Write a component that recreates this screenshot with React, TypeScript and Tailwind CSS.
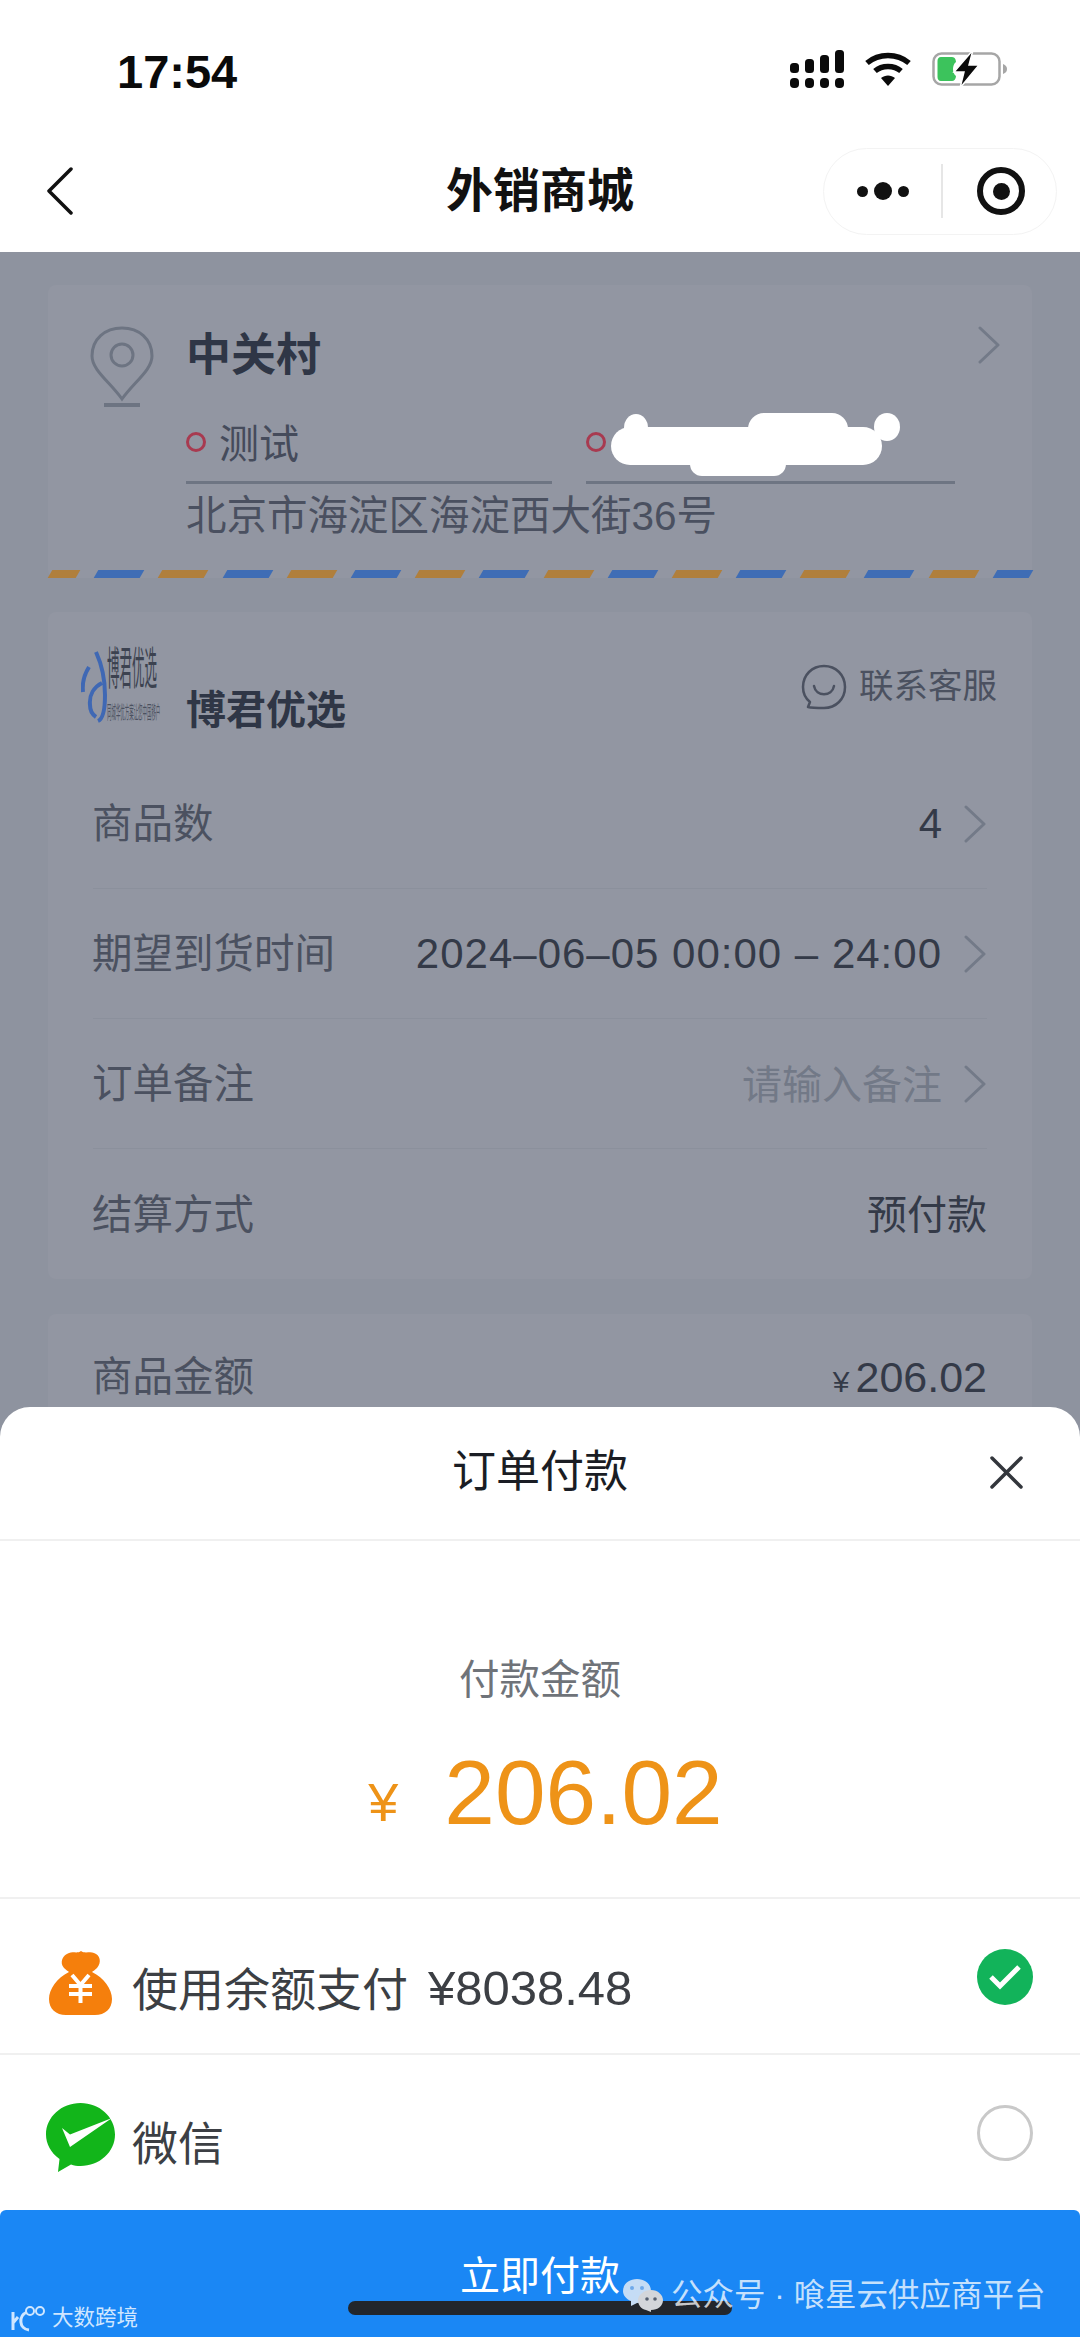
import type { ReactNode } from "react";

const FONT = "[font-family:'Liberation_Sans','Noto_Sans_CJK_SC',sans-serif]";
const STRIPES = Array.from({ length: 16 }, (_, i) => i);

function Chevron() {
  return (
    <svg width="23" height="38" viewBox="0 0 23 38" fill="none" className="shrink-0">
      <polyline points="2,2 20,19 2,36" stroke="#737a88" strokeWidth="3" strokeLinecap="round" strokeLinejoin="round" />
    </svg>
  );
}

function SignalIcon() {
  const cols = [
    { x: 0, y: 13 },
    { x: 15, y: 9 },
    { x: 30, y: 5 },
    { x: 45, y: 0 },
  ];
  return (
    <svg width="54" height="38" viewBox="0 0 54 38" fill="#0a0a0a">
      {cols.map((c) => (
        <g key={c.x}>
          <rect x={c.x} y={c.y} width="9" height={23 - c.y} rx="3.5" />
          <rect x={c.x} y="28" width="9" height="10" rx="4" />
        </g>
      ))}
    </svg>
  );
}

function WifiIcon() {
  return (
    <svg width="46" height="35" viewBox="0 0 46 35" fill="none">
      <path d="M2 11 C14 1 32 1 44 11" stroke="#0a0a0a" strokeWidth="5.5" />
      <path d="M10 19 C17 13 29 13 36 19" stroke="#0a0a0a" strokeWidth="5.5" />
      <path d="M16 26 C20 22.5 26 22.5 30 26 L23 34 Z" fill="#0a0a0a" />
    </svg>
  );
}

function BatteryIcon() {
  return (
    <svg width="76" height="38" viewBox="0 0 76 38">
      <rect x="1.5" y="3.5" width="66" height="31" rx="8" fill="none" stroke="#a6a6a6" strokeWidth="2.5" />
      <path d="M71 14 C74 15 75 17 75 19 C75 21 74 23 71 24 Z" fill="#a6a6a6" />
      <path d="M9 7 H20 C23 7 24 10 24 12 C20 15 20 23 24 26 C24 29 22 31 20 31 H9 C6.500 31 5.500 29 5.500 27 V11 C5.500 9 6.500 7 9 7 Z" fill="#3cc35c" />
      <path d="M41 0 L22 22 H32 L28 38 L47 15 H37 Z" fill="#0a0a0a" stroke="#fff" strokeWidth="1.500" />
    </svg>
  );
}

function PinIcon() {
  return (
    <svg width="65" height="82" viewBox="0 0 65 82" fill="none" stroke="#6d7482" strokeWidth="3" className="shrink-0">
      <path d="M32 73 C20 56 2 44 2 30 C2 13 15 2 32 2 C49 2 62 13 62 30 C62 44 44 56 32 73 Z" />
      <circle cx="32" cy="29" r="11" />
      <line x1="14" y1="79" x2="50" y2="79" strokeWidth="4" />
    </svg>
  );
}

function ContactIcon() {
  return (
    <svg width="46" height="46" viewBox="0 0 46 46" fill="none" stroke="#4b5160" strokeWidth="2.500" className="shrink-0">
      <path d="M9 38 C4 34 2 29 2 23 C2 11 11 2 23 2 C35 2 44 11 44 23 C44 35 35 44 23 44 C17 44 11 44 7 43 Z" strokeLinejoin="round" />
      <path d="M13 22 C15 33 31 33 33 22" strokeLinecap="round" />
    </svg>
  );
}

function BagIcon() {
  return (
    <svg width="63" height="64" viewBox="0 0 63 64" className="mt-[13px] shrink-0">
      <path
        d="M20 2 C24 0 28 3 32 0 C36 3 41 0 45 2 C51 4 53 11 48 17 C46 19 44 20 43 21 C55 27 63 38 63 48 C63 58 56 64 46 64 H17 C7 64 0 58 0 48 C0 38 8 27 20 21 C19 20 17 19 15 17 C10 11 14 4 20 2 Z"
        fill="#f57f0c"
      />
      <path d="M23 24 L31.500 34 L40 24 M20 35 H43 M20 43 H43 M31.500 34 V52" fill="none" stroke="#fff" strokeWidth="4" />
    </svg>
  );
}

function WechatPayIcon() {
  return (
    <svg width="69" height="69" viewBox="0 0 69 69" className="mt-[10px] shrink-0">
      <path d="M34.500 0 C53.500 0 69 14 69 31.500 C69 49 53.500 63 34.500 63 C31 63 28 62.500 25 61.500 L12 69 L13.500 56 C5 50 0 41 0 31.500 C0 14 15.500 0 34.500 0 Z" fill="#12b51a" />
      <path d="M16 25 L24 31.500 L66 15 L24 44 Z" fill="#fff" />
    </svg>
  );
}

function InfoRow({ label, children, last }: { label: string; children?: ReactNode; last?: boolean }) {
  return (
    <div className={`flex h-[130px] items-center justify-between ${last ? "" : "border-b border-[#8b909c]"}`}>
      <span className="-ml-[1px] pt-[2px] text-[40.5px] text-[#4b5160]">{label}</span>
      <div className="flex items-center gap-[22px]">{children}</div>
    </div>
  );
}

export default function App() {
  return (
    <div className={`relative h-[2337px] w-[1080px] overflow-hidden bg-[#8e939f] ${FONT}`}>
      {/* Top bars */}
      <header className="bg-white">
        <div className="flex h-[130px] items-start justify-between pt-[48px] pl-[117px] pr-[72px]">
          <span className="text-[47px] leading-[48px] font-bold text-[#0a0a0a]">17:54</span>
          <div className="flex items-center gap-[21px] pt-[2px]">
            <SignalIcon />
            <WifiIcon />
            <BatteryIcon />
          </div>
        </div>
        <div className="grid h-[122px] grid-cols-[1fr_auto_1fr] items-center px-[23px]">
          <svg width="28" height="48" viewBox="0 0 28 48" fill="none" className="ml-[23px]">
            <polyline points="25,2 3,24 25,46" stroke="#111" strokeWidth="3.500" strokeLinecap="round" strokeLinejoin="round" />
          </svg>
          <h1 className="text-[47px] font-bold text-[#111]">外销商城</h1>
          <div className="flex h-[87px] w-[234px] items-center justify-self-end rounded-full border border-[#f3f3f3]">
            <div className="flex w-[117px] items-center justify-center gap-[6px]">
              <span className="h-[11px] w-[11px] rounded-full bg-[#111]" />
              <span className="h-[18px] w-[18px] rounded-full bg-[#111]" />
              <span className="h-[11px] w-[11px] rounded-full bg-[#111]" />
            </div>
            <span className="h-[54px] w-[2px] bg-[#e6e6e6]" />
            <div className="flex flex-1 items-center justify-center pl-[3px]">
              <span className="flex h-[48px] w-[48px] items-center justify-center rounded-full border-[6px] border-[#111]">
                <span className="h-[17px] w-[17px] rounded-full bg-[#111]" />
              </span>
            </div>
          </div>
        </div>
      </header>

      {/* Order page behind the sheet */}
      <main className="px-[48px] pt-[33px]">
        <section className="rounded-[8px] bg-[#9296a2]">
          <div className="flex items-start pl-[42px] pr-[33px] pt-[41px]">
            <PinIcon />
            <div className="ml-[31px] w-[769px]">
              <p className="h-[56px] text-[45px] leading-[60px] font-bold text-[#2f3646]">中关村</p>
              <div className="mt-[32px] flex gap-[34px]">
                <div className="flex h-[70px] w-[366px] items-center gap-[13px] border-b-[3px] border-[#6e7583] pb-[7px]">
                  <span className="mb-[4px] h-[20px] w-[20px] rounded-full border-[3px] border-[#a83a50]" />
                  <span className="text-[40px] text-[#454b5b]">测试</span>
                </div>
                <div className="relative flex h-[70px] w-[369px] items-center border-b-[3px] border-[#6e7583] pb-[7px]">
                  <span className="mb-[4px] h-[20px] w-[20px] rounded-full border-[3px] border-[#a83a50]" />
                  {/* scribbled-out phone number */}
                  <svg width="294" height="66" viewBox="0 0 294 66" fill="#fff" className="absolute top-[-2px] left-[23px]">
                    <rect x="2" y="15" width="271" height="38" rx="19" />
                    <ellipse cx="27" cy="16" rx="12" ry="14" />
                    <rect x="139" y="1" width="100" height="38" rx="16" />
                    <rect x="81" y="36" width="96" height="28" rx="12" />
                    <ellipse cx="278" cy="15" rx="13" ry="14" />
                  </svg>
                </div>
              </div>
              <p className="h-[60px] text-[40.5px] leading-[64px] text-[#4a5060]">北京市海淀区海淀西大街36号</p>
            </div>
            <div className="ml-[23px]">
              <Chevron />
            </div>
          </div>
          <div className="mt-[26px] flex h-[8px] justify-between pr-[1px] pl-[2px]">
            {STRIPES.map((i) => (
              <span key={i} className={`-skew-x-[30deg] ${i % 2 === 0 ? "bg-[#b07f3c]" : "bg-[#3f6db5]"} ${i === 0 ? "w-[28px]" : i === 15 ? "w-[36px]" : "w-[46px]"}`} />
            ))}
          </div>
        </section>

        <section className="mt-[34px] rounded-[8px] bg-[#9296a2] px-[45px]">
          <div className="flex h-[147px] items-start">
            <div className="mt-[35px] -ml-[12px] flex h-[79px] w-[84px] shrink-0">
              <svg width="26" height="76" viewBox="0 0 26 76" fill="none" stroke="#3f68b4" strokeWidth="4" className="shrink-0">
                <path d="M8 20 C3 28 1 36 2 45 M15 5 C20 16 24 30 24 48 C24 62 22 72 17 74 M21 36 C13 40 8 48 9 58 C9 64 12 68 15 70" />
              </svg>
              <div className="flex w-[58px] shrink-0 flex-col">
                <span className="h-[46px] w-[48px] origin-top-left scale-x-[0.5] scale-y-[1.800] whitespace-nowrap text-[25px] leading-[25px] text-[#3c4250]">博君优选</span>
                <span className="mt-[9px] h-[20px] w-[55px] origin-top-left scale-x-[0.370] scale-y-[1.500] whitespace-nowrap text-[12px] leading-[14px] text-[#4b5160]">同城华优方案让您中国移户</span>
              </div>
            </div>
            <p className="mt-[70px] ml-[21px] text-[40px] leading-[56px] font-bold text-[#2f3646]">博君优选</p>
            <div className="mt-[51px] ml-auto -mr-[10px] flex h-[48px] items-center gap-[12px]">
              <ContactIcon />
              <span className="text-[34.5px] text-[#4b5160]">联系客服</span>
            </div>
          </div>
          <InfoRow label="商品数">
            <span className="text-[42px] text-[#343a48]">4</span>
            <Chevron />
          </InfoRow>
          <InfoRow label="期望到货时间">
            <span className="text-[42px] tracking-[1px] text-[#343a48]">2024–06–05 00:00 – 24:00</span>
            <Chevron />
          </InfoRow>
          <InfoRow label="订单备注">
            <span className="pt-[2px] text-[40px] text-[#727987]">请输入备注</span>
            <Chevron />
          </InfoRow>
          <InfoRow label="结算方式" last>
            <span className="pt-[2px] text-[40px] text-[#343a48]">预付款</span>
          </InfoRow>
        </section>

        <section className="mt-[35px] rounded-[8px] bg-[#9296a2] px-[45px]">
          <div className="flex h-[126px] items-center justify-between">
            <span className="-ml-[1px] text-[40.5px] text-[#4b5160]">商品金额</span>
            <span className="text-[43px] text-[#343a48]"><span className="mr-[6px] text-[30px]">¥</span>206.02</span>
          </div>
        </section>
      </main>

      {/* Payment sheet */}
      <section className="absolute right-0 bottom-0 left-0 flex h-[930px] flex-col rounded-t-[30px] bg-white">
        <div className="grid h-[134px] shrink-0 grid-cols-[1fr_auto_1fr] items-center border-b-2 border-[#f0f0f0] pb-[2px]">
          <span />
          <h2 className="text-[44px] text-[#1a1d24]">订单付款</h2>
          <svg width="33" height="33" viewBox="0 0 33 33" fill="none" className="mr-[57px] justify-self-end">
            <path d="M2 2 L31 31 M31 2 L2 31" stroke="#33363c" strokeWidth="3.500" strokeLinecap="round" />
          </svg>
        </div>
        <div className="flex h-[358px] shrink-0 flex-col items-center border-b-2 border-[#f0f0f0] pt-[111px]">
          <p className="text-[40.5px] leading-[56px] text-[#6f7379]">付款金额</p>
          <div className="mt-[35px] ml-[11px] flex items-baseline gap-[46px] leading-[100px] text-[#ee9318]">
            <span className="-translate-y-[3px] text-[54px]">¥</span>
            <span className="text-[91px]">206.02</span>
          </div>
        </div>
        <div className="flex h-[156px] shrink-0 items-center border-b-2 border-[#f0f0f0] pl-[49px] pr-[47px]">
          <BagIcon />
          <span className="mt-[28px] ml-[20px] text-[46px] text-[#3c3f44]">使用余额支付</span>
          <span className="mt-[26px] ml-[20px] text-[49px] text-[#3c3f44]">¥8038.48</span>
          <span className="mt-[2px] ml-auto flex h-[56px] w-[56px] items-center justify-center rounded-full bg-[#12b35a]">
            <svg width="34" height="26" viewBox="0 0 34 26" fill="none">
              <path d="M3 13 L12 22 L31 3" stroke="#fff" strokeWidth="5" />
            </svg>
          </span>
        </div>
        <div className="flex h-[155px] shrink-0 items-center pl-[46px] pr-[47px]">
          <WechatPayIcon />
          <span className="mt-[24px] ml-[17px] text-[46px] text-[#3c3f44]">微信</span>
          <span className="ml-auto h-[56px] w-[56px] rounded-full border-[3px] border-[#c9c9c9]" />
        </div>
        <button className="flex flex-1 items-center justify-center rounded-t-[6px] bg-[#1a87f5] pt-[5px] text-[40px] text-white">
          立即付款
        </button>
      </section>

      {/* Overlays along the bottom edge */}
      <div className="absolute top-[2301px] left-[348px] h-[14px] w-[384px] rounded-full bg-[#22262c]" />
      <div className="absolute top-[2275px] left-[623px] flex items-center gap-[8px] text-[31.500px] leading-[40px] text-white/75">
        <svg width="40" height="33" viewBox="0 0 40 33">
          <path d="M14 0 C22 0 28 5 28 12 C28 19 22 24 14 24 L8 27 L8 22 C3 20 0 16 0 12 C0 5 6 0 14 0 Z" fill="#c5dcf5" />
          <circle cx="9" cy="9" r="2" fill="#6fa9ea" />
          <circle cx="19" cy="9" r="2" fill="#6fa9ea" />
          <path d="M28 11 C35 11 40 16 40 21 C40 27 35 31 28 31 L28 33 L23 31 C18 30 15 26 15 21 C15 16 21 11 28 11 Z" fill="#d3d6da" />
          <circle cx="24" cy="20" r="1.800" fill="#556070" />
          <circle cx="32" cy="20" r="1.800" fill="#556070" />
        </svg>
        <span>公众号 · 喰星云供应商平台</span>
      </div>
      <div className="absolute top-[2300px] left-[10px] flex items-center gap-[4px] text-[21.5px] leading-[36px] text-[#cfe6ff]">
        <svg width="38" height="30" viewBox="0 0 38 30" fill="none" stroke="#cfe6ff" strokeWidth="3">
          <path d="M3 9 V27 M8 14 L3 20 M17 9 C8 13 9 26 19 27" />
          <circle cx="20" cy="8" r="4" strokeWidth="2" />
          <circle cx="30" cy="8" r="4" strokeWidth="2" />
        </svg>
        <span>大数跨境</span>
      </div>
    </div>
  );
}
